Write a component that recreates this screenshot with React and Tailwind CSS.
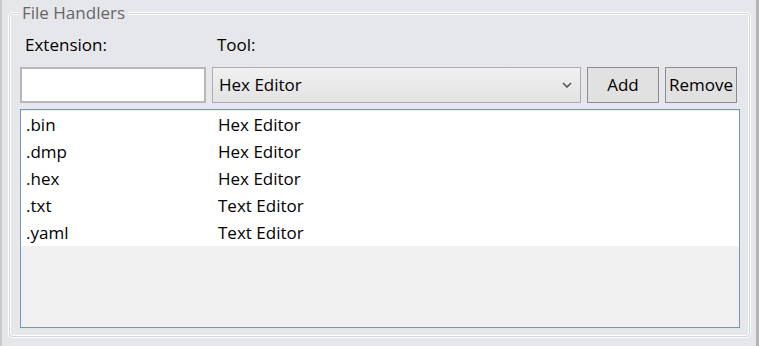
export default function App() {
  const rows = [
    [".bin", "Hex Editor"],
    [".dmp", "Hex Editor"],
    [".hex", "Hex Editor"],
    [".txt", "Text Editor"],
    [".yaml", "Text Editor"],
  ];
  return (
    <div
      className="w-[759px] h-[346px] flex bg-[#e6e7eb] text-black overflow-hidden"
      style={{ fontFamily: '"Open Sans", "Noto Sans", sans-serif' }}
    >
      <div className="w-[2px] bg-[#c9c9c9]" />
      <div className="flex-1 flex flex-col pt-[13px] pl-[7px] pr-[6px] pb-[9px]">
        <div className="relative flex-1 flex flex-col rounded-[4px] border border-[#cdd6df] shadow-[0_0_0_1px_#ffffff,inset_0_0_0_1px_#ffffff] pl-[10px] pr-[9px] pt-[19px] pb-[8px]">
          <span className="absolute left-[9px] top-[-13px] px-[3px] bg-[#e6e7eb] text-[17px] leading-[24px] text-[#666666]">
            File Handlers
          </span>
          <div className="flex h-[24px] text-[17px] leading-[24px]">
            <span className="w-[192px] pl-[5px]">Extension:</span>
            <span className="pl-[5px]">Tool:</span>
          </div>
          <div className="flex gap-[6px] mt-[10px] h-[36px] text-[17px]">
            <div className="w-[186px] bg-white border-2 border-[#b8b8b8]" />
            <div className="w-[369px] flex items-center justify-between border border-[#acacac] bg-gradient-to-b from-[#f0f0f0] to-[#e3e3e3] pl-[6px] pr-[8px]">
              <span>Hex Editor</span>
              <svg width="10" height="6" viewBox="0 0 10 6" fill="none">
                <path d="M1 1 L5 5 L9 1" stroke="#555" strokeWidth="1.6" />
              </svg>
            </div>
            <div className="w-[72px] flex items-center justify-center border border-[#8c8c8c] bg-[#e1e1e1]">
              Add
            </div>
            <div className="w-[72px] flex items-center justify-center border border-[#8c8c8c] bg-[#e1e1e1]">
              Remove
            </div>
          </div>
          <div className="mt-[6px] flex-1 flex flex-col border border-[#7396bd] bg-[#f0f0f0] pt-[1px]">
            {rows.map(([ext, tool]) => (
              <div key={ext} className="flex h-[27px] items-center bg-white text-[17px]">
                <span className="w-[197px] pl-[5px]">{ext}</span>
                <span>{tool}</span>
              </div>
            ))}
          </div>
        </div>
      </div>
      <div className="w-[3px] bg-[#b3b3b3]" />
    </div>
  );
}
